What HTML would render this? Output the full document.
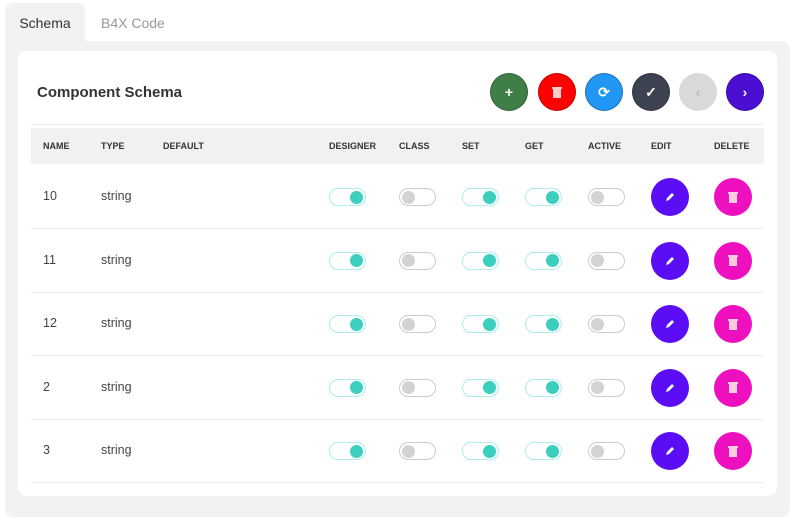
<!DOCTYPE html><html><head><style>
body{margin:0;width:800px;height:524px;background:#fff;font-family:"Liberation Sans",sans-serif;position:relative;overflow:hidden}
.a{position:absolute}
.tab{left:5px;top:3px;width:80px;height:45px;background:#f2f2f2;border-radius:8px 8px 0 0;font-size:14px;color:#333;text-align:center;line-height:40px}
.tab2{left:101px;top:3px;line-height:40px;font-size:14px;color:#999}
.panel{left:5px;top:41px;width:785px;height:476px;background:#f2f2f2;border-radius:0 8px 8px 8px}
.card{left:18px;top:51px;width:759px;height:445px;background:#fff;border-radius:9px}
h1{position:absolute;left:37px;top:84px;margin:0;font-size:15px;font-weight:bold;color:#333}
.btn{width:36px;height:36px;border-radius:50%;top:73px;display:flex;align-items:center;justify-content:center;color:#fff;font-size:14px;font-weight:bold;border:1px solid rgba(0,0,0,.25)}
.hdr{left:31px;top:128px;width:733px;height:36px;background:#f1f1f1}
.th{top:141px;font-size:9px;font-weight:bold;color:#333}
.td{font-size:12.5px;color:#444}
.tg{width:35px;height:16px;border-radius:10px;border:1px solid #aee;background:#fff}
.tg i{position:absolute;top:1.5px;right:2px;width:13px;height:13px;border-radius:50%;background:#3ccfbd}
.tg.off{border-color:#ccc}.tg.off i{left:2px;right:auto;background:#d3d3d6}
.c{width:38px;height:38px;border-radius:50%;display:flex;align-items:center;justify-content:center}
.line{left:31px;width:733px;height:1px;background:#eee}
</style></head><body>
<div class="a panel"></div>
<div class="a tab">Schema</div>
<div class="a tab2">B4X Code</div>
<div class="a card"></div>
<h1>Component Schema</h1>
<div class="a btn" style="left:490px;background:#3f7f47">+</div>
<div class="a btn" style="left:538px;background:#f00"><svg width="10" height="11"><rect x="1" y="2" width="8" height="9" fill="#fcc"/><rect x="0" y="0" width="10" height="2" fill="#fcc"/></svg></div>
<div class="a btn" style="left:585px;background:#2196f3">⟳</div>
<div class="a btn" style="left:632px;background:#3d4251">✓</div>
<div class="a btn" style="left:679px;background:#d9d9db;color:#bbb;border-color:#d9d9db">‹</div>
<div class="a btn" style="left:726px;background:#4a0fd0">›</div>
<div class="a line" style="top:124px"></div>
<div class="a hdr"></div>
<div class="a th" style="left:43px">NAME</div><div class="a th" style="left:101px">TYPE</div><div class="a th" style="left:163px">DEFAULT</div><div class="a th" style="left:329px">DESIGNER</div><div class="a th" style="left:399px">CLASS</div><div class="a th" style="left:462px">SET</div><div class="a th" style="left:525px">GET</div><div class="a th" style="left:588px">ACTIVE</div><div class="a th" style="left:651px">EDIT</div><div class="a th" style="left:714px">DELETE</div>
<div id="rows"></div>
<script>
var n=["10","11","12","2","3"],h="";
n.forEach(function(v,i){var y=197+i*63.6;
h+='<div class="a td" style="left:43px;top:'+(y-8)+'px">'+v+'</div><div class="a td" style="left:101px;top:'+(y-8)+'px">string</div>';
[[329,1],[399,0],[462,1],[525,1],[588,0]].forEach(function(t){h+='<div class="a tg'+(t[1]?'':' off')+'" style="left:'+t[0]+'px;top:'+(y-9)+'px"><i></i></div>'});
h+='<div class="a c" style="left:651px;top:'+(y-19)+'px;background:#5b0ef5"><svg width="12" height="12"><path d="M2 10 L3 7 L8 2 L10 4 L5 9 Z" fill="#fff"/></svg></div>';
h+='<div class="a c" style="left:714px;top:'+(y-19)+'px;background:#ee0fbf"><svg width="10" height="11"><rect x="1" y="2" width="8" height="9" fill="#fcd"/><rect x="0" y="0" width="10" height="2" fill="#fcd"/></svg></div>';
h+='<div class="a line" style="top:'+(y+31)+'px"></div>';});
document.getElementById("rows").innerHTML=h;
</script>
</body></html>
